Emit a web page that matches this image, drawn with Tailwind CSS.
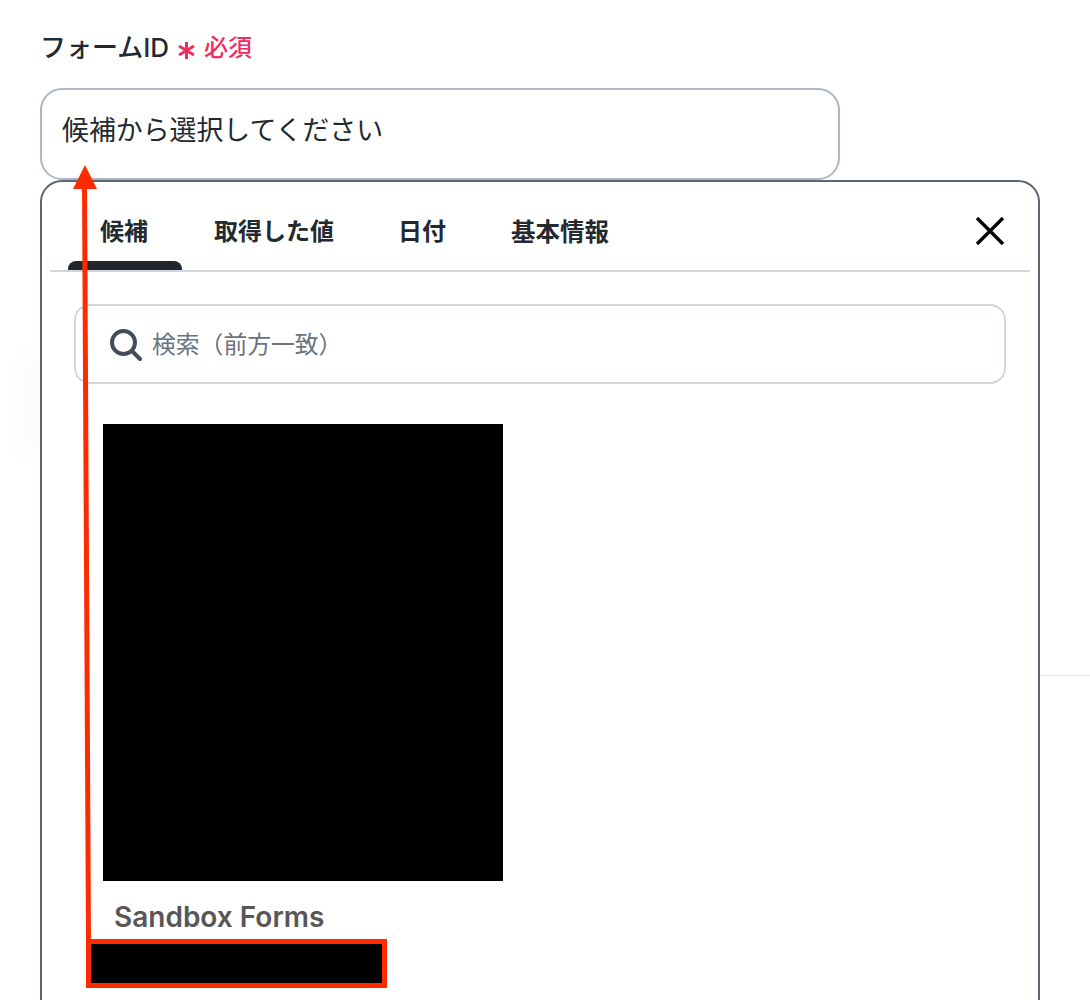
<!DOCTYPE html>
<html lang="ja">
<head>
  <meta charset="UTF-8" />
  <title>フォームID</title>
  <script src="https://cdn.jsdelivr.net/npm/@tailwindcss/browser@4"></script>
</head>
<body class="bg-white font-['Inter','Noto_Sans_CJK_JP',sans-serif] text-[#24292f]">
  <div class="relative h-[1000px] w-[1090px] overflow-hidden">

    <!-- Background behind the panel: rule and faint shadow -->
    <div class="absolute left-[1040px] right-0 top-[675px] h-px bg-[#e5e7eb]"></div>
    <div class="absolute left-[16px] top-[350px] h-[110px] w-[60px] rounded-full bg-[#fafbfb] blur-[12px]"></div>

    <div class="relative pl-[40px] pt-[32px]">
      <!-- Label -->
      <div class="flex h-[32px] items-center text-[26px] leading-[32px] font-medium">
        <span>フォームID</span>
        <svg class="ml-[9px] mt-[5px]" width="17" height="17" viewBox="0 0 17 17" fill="none" stroke="#f02d5f" stroke-width="3"><path d="M8.5 0v17M1 4l15 9M16 4L1 13"/></svg>
        <span class="ml-[9px] text-[24px] text-[#f02d5f]">必須</span>
      </div>

      <!-- Input -->
      <div class="mt-[24px] flex h-[92px] w-[800px] items-start rounded-[22px] border-2 border-[#adb6c4] pl-[20px] pt-[22px] text-[26.9px] leading-[36px]">候補から選択してください</div>

      <!-- Panel -->
      <div class="relative h-[900px] w-[1000px] rounded-t-[22px] border-2 border-[#5d6573] bg-white px-[8px] pt-[1px]">
        <div class="flex h-[89px] items-stretch border-b-2 border-[#d0d5e0]">
          <div class="relative ml-[18px] w-[114px] pt-[32px] pr-[2px] text-center text-[24px] leading-[34px] font-semibold">
            候補
            <div class="absolute inset-x-0 bottom-0 h-[9px] rounded-t-[8px] bg-[#22272e]"></div>
          </div>
          <div class="ml-[32px] pt-[32px] text-[24px] leading-[34px] font-semibold">取得した値</div>
          <div class="ml-[64px] pt-[32px] text-[24px] leading-[34px] font-semibold">日付</div>
          <div class="ml-[65px] pt-[32px] text-[24.5px] leading-[34px] font-semibold">基本情報</div>
          <div class="ml-auto mr-[25px] pt-[34px]">
            <svg width="30" height="28" viewBox="0 0 30 28" fill="none" stroke="#000" stroke-width="3.4"><path d="M2 1l26 26M28 1L2 27"/></svg>
          </div>
        </div>

        <!-- Search -->
        <div class="ml-[24px] mt-[32px] flex h-[80px] w-[932px] items-center rounded-[16px] border-2 border-[#d0d5e0] pl-[33px]">
          <svg width="33" height="33" viewBox="0 0 33 33" fill="none" stroke="#454c59" stroke-linecap="round">
            <circle cx="14.5" cy="14.5" r="11.5" stroke-width="4"/>
            <path d="M23 23l8 8" stroke-width="4"/>
          </svg>
          <span class="ml-[10px] mt-[1px] text-[23.8px] text-[#6b7280]">検索（前方一致）</span>
        </div>

        <!-- Result -->
        <div class="ml-[53px] mt-[40px] h-[457px] w-[400px] bg-black"></div>
        <div class="ml-[64px] mt-[19px] text-[28px] leading-[34px] font-semibold text-[#575757]">Sandbox Forms</div>
      </div>
    </div>

    <!-- Annotation overlay -->
    <div class="absolute left-[86px] top-[939px] h-[49px] w-[301px] border-[5px] border-[#ff2b00] bg-black"></div>
    <svg class="absolute left-0 top-0" width="1090" height="1000" fill="none">
      <path d="M88.5 942L84.5 185" stroke="#ff2b00" stroke-width="5"/>
      <path d="M85 165L97 189H73Z" fill="#ff2b00"/>
    </svg>
  </div>
</body>
</html>
